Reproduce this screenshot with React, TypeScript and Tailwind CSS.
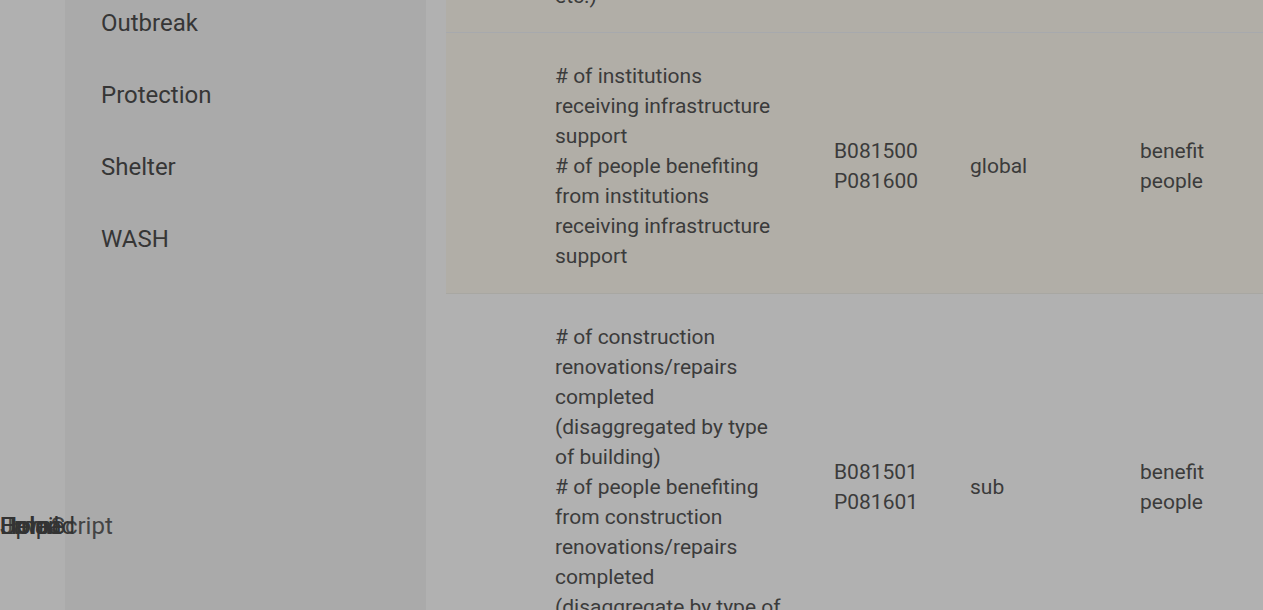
import React from "react";

const rows = [
  {
    text: ["# of health facilities", "receiving equipment", "(beds, generators,", "etc.)"],
    codes: ["B081400", "P081500"],
    level: "global",
    type: ["benefit", "people"],
    cls: "bg-[#b1aea7] border-[#a7a9ad] pb-[21px]",
  },
  {
    text: [
      "# of institutions receiving infrastructure support",
      "# of people benefiting from institutions receiving infrastructure support",
    ],
    codes: ["B081500", "P081600"],
    level: "global",
    type: ["benefit", "people"],
    cls: "bg-[#b1aea7] border-[#a8a7a2] pb-[22px]",
  },
  {
    text: [
      "# of construction renovations/repairs completed (disaggregated by type of building)",
      "# of people benefiting from construction renovations/repairs completed (disaggregate by type of building)",
    ],
    codes: ["B081501", "P081601"],
    level: "sub",
    type: ["benefit", "people"],
    cls: "bg-[#b1b1b1] border-[#a8a8a8] pb-[22px]",
  },
];

export default function App() {
  return (
    <div className="flex h-[610px] w-[1263px] overflow-hidden bg-[#b0b0b0] font-['Roboto',sans-serif] text-[#3b3b3b]">
      <div className="relative w-[65px] shrink-0">
        <div className="absolute left-0 top-[510px] whitespace-nowrap text-[24px] leading-[32px] text-[#444]">JavaScript</div>
        <div className="absolute left-0 top-[510px] whitespace-nowrap text-[24px] leading-[32px] text-[#333]">Upload</div>
        <div className="absolute left-0 top-[510px] whitespace-nowrap text-[24px] leading-[32px] text-[#333]">Email</div>
        <div className="absolute left-0 top-[510px] whitespace-nowrap text-[24px] leading-[32px] text-[#333]">Help</div>
        <div className="absolute left-0 top-[510px] whitespace-nowrap text-[24px] leading-[32px] text-[#333]">Home</div>
      </div>
      <nav className="w-[361px] shrink-0 bg-[#aaaaaa] text-[24px] text-[#363636]">
        <ul className="-mt-[13px] pl-[36px]">
          {["Outbreak", "Protection", "Shelter", "WASH"].map((s) => (
            <li key={s} className="h-[72px] leading-[72px]">{s}</li>
          ))}
        </ul>
      </nav>
      <div className="w-[20px] shrink-0 bg-[#b1b1b1]" />
      <main className="-mt-[137px] flex-1 bg-[#b1b1b1] text-[21px] leading-[30px]">
        {rows.map((r, i) => (
          <div
            key={i}
            className={`grid grid-cols-[109px_279px_136px_170px_1fr] items-center border-b pt-[28px] ${r.cls}`}
          >
            <div />
            <div className="w-[230px]">
              {r.text.map((t, j) => (
                <div key={j}>{t}</div>
              ))}
            </div>
            <div>
              {r.codes.map((c) => (
                <div key={c}>{c}</div>
              ))}
            </div>
            <div>{r.level}</div>
            <div>
              {r.type.map((c) => (
                <div key={c}>{c}</div>
              ))}
            </div>
          </div>
        ))}
      </main>
    </div>
  );
}
